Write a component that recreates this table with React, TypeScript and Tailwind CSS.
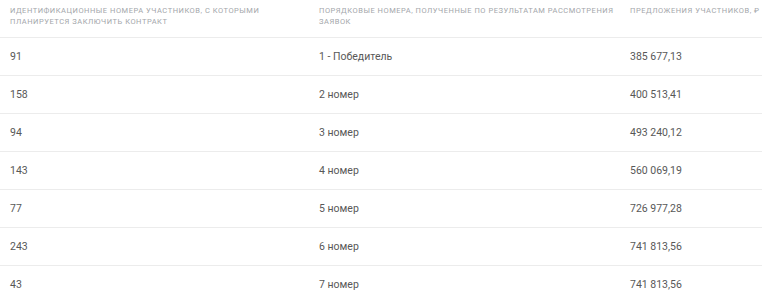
import React from "react";

const rows: [string, string, string][] = [
  ["91", "1 - Победитель", "385 677,13"],
  ["158", "2 номер", "400 513,41"],
  ["94", "3 номер", "493 240,12"],
  ["143", "4 номер", "560 069,19"],
  ["77", "5 номер", "726 977,28"],
  ["243", "6 номер", "741 813,56"],
  ["43", "7 номер", "741 813,56"],
];

const th = "align-top text-left font-normal uppercase text-[7.5px] leading-[11px] tracking-[0.07em] text-[#a3a6aa] pl-[10px] pt-[5px]";

export default function App() {
  return (
    <div className="w-[762px] h-[300px] overflow-hidden bg-white" style={{ fontFamily: "Roboto, 'Noto Sans', sans-serif" }}>
      <table className="w-full table-fixed border-collapse">
        <colgroup>
          <col className="w-[309px]" />
          <col className="w-[311px]" />
          <col />
        </colgroup>
        <thead>
          <tr className="h-[37px]">
            <th className={th + " pr-4"}>
              Идентификационные номера участников, с которыми планируется заключить контракт
            </th>
            <th className={th + " pr-0"}>
              Порядковые номера, полученные по результатам рассмотрения заявок
            </th>
            <th className={th + " pr-0 whitespace-nowrap"}>
              Предложения участников, ₽
            </th>
          </tr>
        </thead>
        <tbody>
          {rows.map((r, i) => (
            <tr key={i} className="h-[38px] border-t border-[#ececec] text-[10.5px] text-[#585858]">
              <td className="pl-[10px] pt-[1px] align-middle">{r[0]}</td>
              <td className="pl-[10px] pt-[1px] align-middle">{r[1]}</td>
              <td className="pl-[10px] pt-[1px] align-middle">{r[2]}</td>
            </tr>
          ))}
        </tbody>
      </table>
    </div>
  );
}
